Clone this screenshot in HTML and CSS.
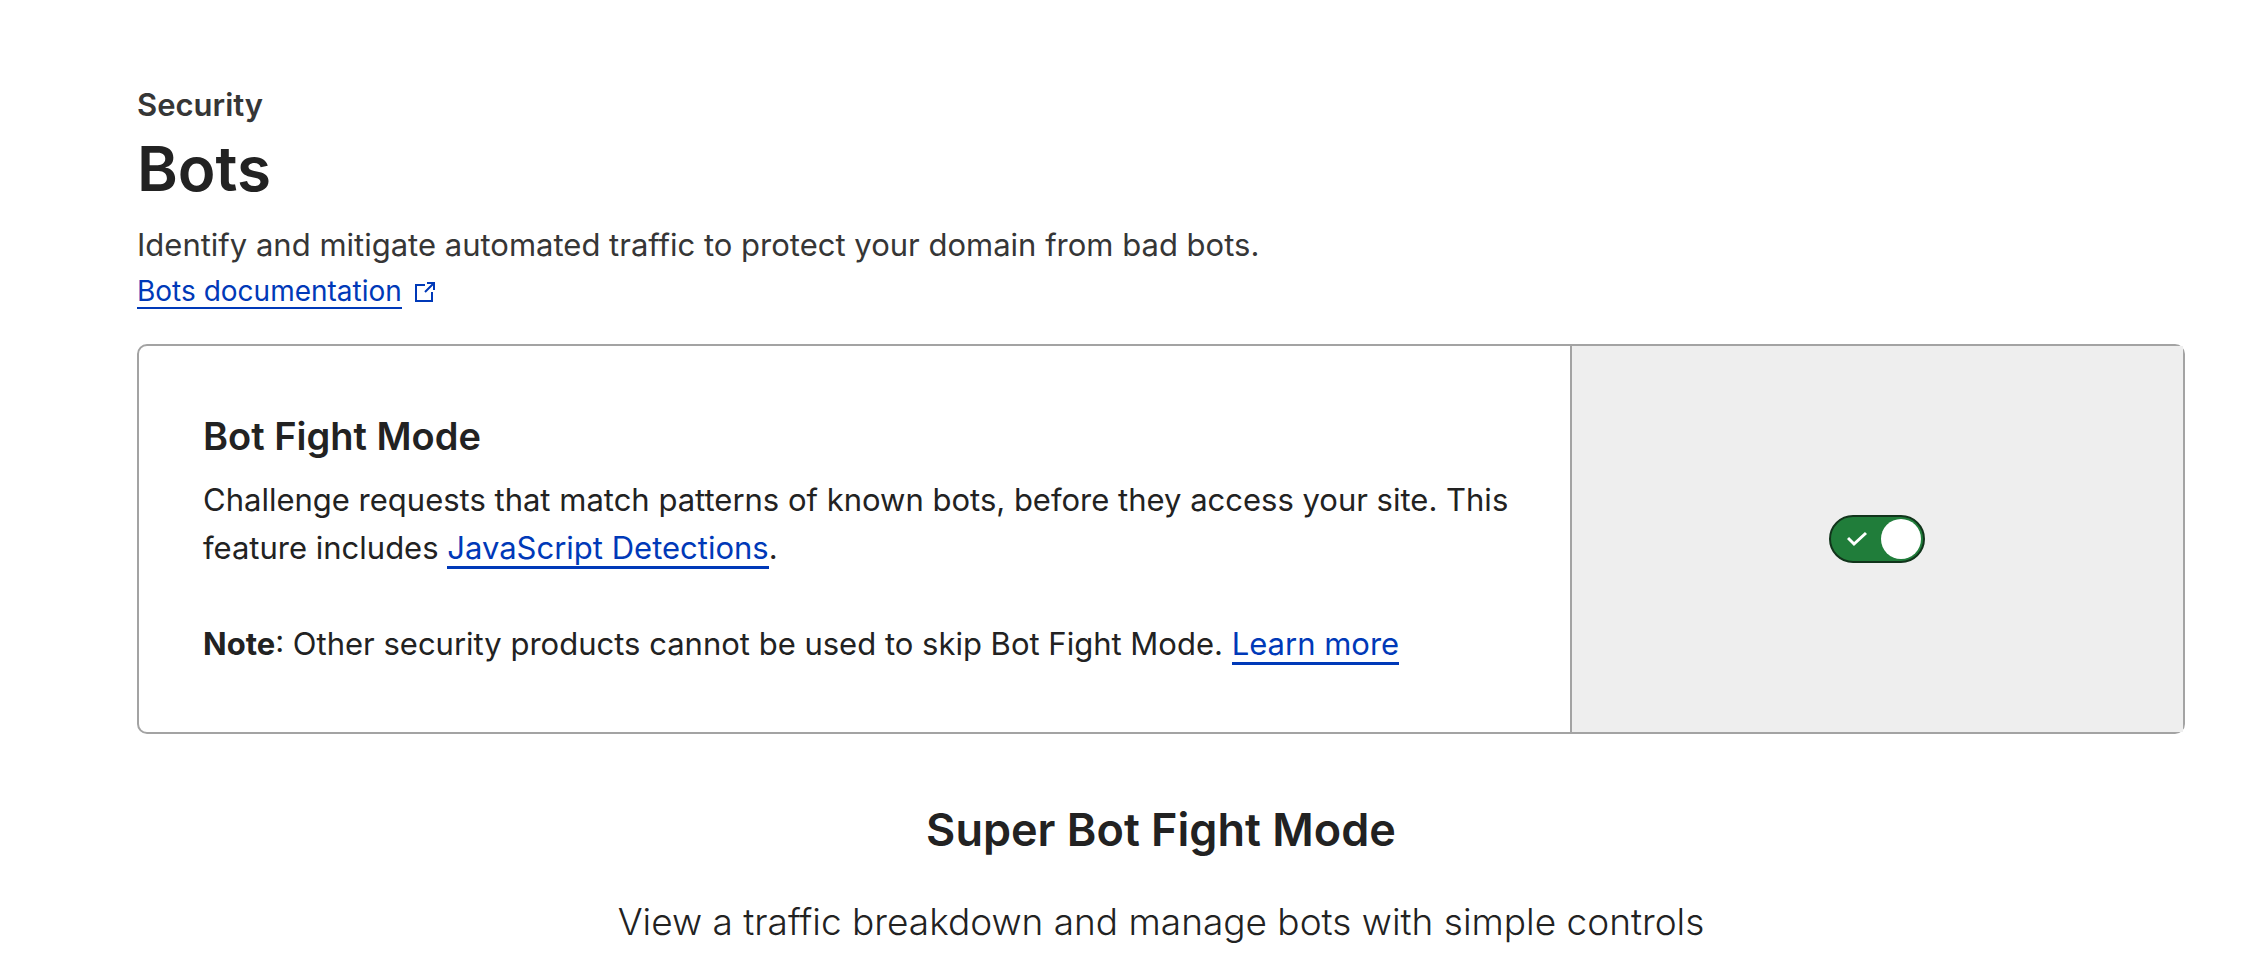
FILE: index.html
```html
<!DOCTYPE html>
<html lang="en">

<head>
  <meta charset="UTF-8" />
  <meta name="viewport" content="width=device-width, initial-scale=1" />
  <title>Bots | Security</title>
  <link rel="stylesheet" href="styles.css">
</head>

<body>
  <main class="page">
    <header class="page-header">
      <p class="section">Security</p>
      <h1>Bots</h1>
      <p class="summary">Identify and mitigate automated traffic to protect your domain from bad bots.</p>
      <div class="docs">
        <a href="#">Bots documentation</a>
        <svg class="external" viewBox="0 0 22 22" aria-hidden="true">
          <path d="M11 4H2v16h16v-9" />
          <path d="M11 11L20 2M13 2h7v7" />
        </svg>
      </div>
    </header>

    <section class="card">
      <div class="card-body">
        <h2 id="bot-fight">Bot Fight Mode</h2>
        <p>Challenge requests that match patterns of known bots, before they access your site. This feature includes <a href="#">JavaScript Detections</a>.</p>
        <p><strong>Note</strong>: Other security products cannot be used to skip Bot Fight Mode. <a href="#">Learn more</a></p>
      </div>
      <div class="card-control">
        <label class="toggle">
          <input type="checkbox" aria-labelledby="bot-fight" checked />
          <svg class="check" viewBox="0 0 20 16" aria-hidden="true">
            <path d="M1 7l6 6L19 2" />
          </svg>
          <span class="knob"></span>
        </label>
      </div>
    </section>

    <section class="promo">
      <h2>Super Bot Fight Mode</h2>
      <p>View a traffic breakdown and manage bots with simple controls</p>
    </section>
  </main>
</body>

</html>
```
FILE: styles.css
```css
* {
  box-sizing: border-box;
}

body,
h1,
h2,
p {
  margin: 0;
}

body {
  background: #fff;
  color: #222;
  font-family: Inter, "Liberation Sans", sans-serif;
  font-size: 31px;
  line-height: 48px;
}

h1,
h2 {
  font-weight: 600;
}

a {
  color: #0039b8;
  text-decoration: none;
  border-bottom: 3px solid #0039b8;
}

.page {
  padding: 81px 77px 0 137px;
}

.section {
  color: #363636;
  font-weight: 600;
}

h1 {
  font-size: 62px;
  line-height: 80px;
}

.summary {
  margin-top: 12px;
  color: #363636;
}

.docs {
  display: flex;
  align-items: center;
  gap: 12px;
  margin-top: 6px;
  font-size: 28px;
  line-height: 32px;
}

.docs a {
  border-bottom-width: 2px;
}

.external {
  width: 22px;
  height: 22px;
  fill: none;
  stroke: #0039b8;
  stroke-width: 2;
}

.card {
  display: flex;
  margin-top: 35px;
  border: 2px solid #a3a3a3;
  border-radius: 10px;
}

.card-body {
  width: 70%;
  padding: 64px 40px 64px 64px;
}

.card-body h2 {
  margin-bottom: 14px;
  font-size: 38px;
  line-height: 52px;
}

.card-body p + p {
  margin-top: 48px;
}

.card-body strong {
  font-weight: 700;
}

.card-control {
  display: flex;
  flex: 1;
  align-items: center;
  justify-content: center;
  border-left: 2px solid #a3a3a3;
  background: #eee;
}

.toggle {
  display: flex;
  position: relative;
  align-items: center;
  justify-content: space-between;
  width: 96px;
  height: 48px;
  padding: 0 2px 0 16px;
  border: 2px solid #11341b;
  border-radius: 24px;
  background: #207d3a;
  cursor: pointer;
}

.toggle input {
  position: absolute;
  inset: 0;
  width: 100%;
  height: 100%;
  margin: 0;
  opacity: 0;
  cursor: pointer;
}

.check {
  width: 20px;
  height: 16px;
  fill: none;
  stroke: #fff;
  stroke-width: 3;
}

.knob {
  width: 40px;
  height: 40px;
  border-radius: 50%;
  background: #fff;
}

.promo {
  margin-top: 66px;
  text-align: center;
}

.promo h2 {
  font-size: 45px;
  line-height: 60px;
}

.promo p {
  margin-top: 34px;
  font-size: 37px;
  font-weight: 300;
  line-height: 56px;
}
```
